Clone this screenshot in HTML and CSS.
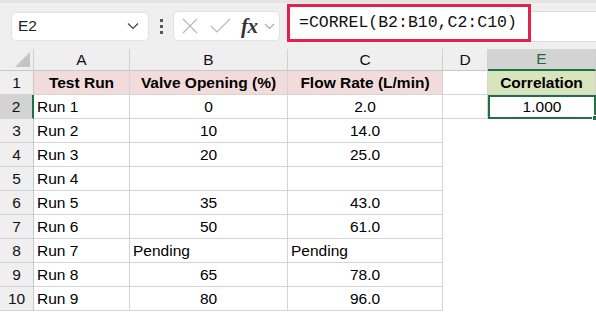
FILE: index.html
```html
<!DOCTYPE html>
<html lang="en">
<head>
    <meta charset="UTF-8">
    <title>CORREL</title>
    <link rel="stylesheet" href="styles.css">
</head>
<body>
    <!-- formula bar -->
    <div class="toolbar">
        <div class="name-box">
            <span>E2</span>
            <svg class="chev" width="12" height="8" viewBox="0 0 12 8"><path d="M1 1.5 L6 6.5 L11 1.5" fill="none" stroke="#444" stroke-width="1.2"/></svg>
        </div>
        <div class="dots"><i></i><i></i><i></i></div>
        <div class="fx-box">
            <svg width="16" height="16" viewBox="0 0 16 16"><path d="M1 1 L15 15 M15 1 L1 15" stroke="#b8b8b8" stroke-width="1.2" fill="none"/></svg>
            <svg width="21" height="16" viewBox="0 0 21 16"><path d="M1 8 L7 14 L20 1" stroke="#b8b8b8" stroke-width="1.2" fill="none"/></svg>
            <span class="fx">fx</span>
            <svg width="11" height="7" viewBox="0 0 11 7"><path d="M1 1 L5.5 5.5 L10 1" fill="none" stroke="#a8a8a8" stroke-width="1.1"/></svg>
        </div>
        <div class="formula">
            <div class="formula-text">=CORREL(B2:B10,C2:C10)</div>
        </div>
    </div>

    <!-- sheet -->
    <div class="sheet">
        <div class="ch corner"><span class="tri"></span></div>
        <div class="ch">A</div>
        <div class="ch">B</div>
        <div class="ch">C</div>
        <div class="ch">D</div>
        <div class="ch ch-active">E</div>

        <div class="rh">1</div>
        <div class="c head">Test Run</div>
        <div class="c head">Valve Opening (%)</div>
        <div class="c head">Flow Rate (L/min)</div>
        <div class="c"></div>
        <div class="c head-green">Correlation</div>

        <div class="rh rh-active">2</div>
        <div class="c">Run 1</div>
        <div class="c num">0</div>
        <div class="c num">2.0</div>
        <div class="c"></div>
        <div class="c num selected">1.000<span class="handle"></span></div>

        <div class="rh">3</div>
        <div class="c">Run 2</div>
        <div class="c num">10</div>
        <div class="c num">14.0</div>
        <div class="c nb"></div>
        <div class="c nb"></div>

        <div class="rh">4</div>
        <div class="c">Run 3</div>
        <div class="c num">20</div>
        <div class="c num">25.0</div>
        <div class="c nb"></div>
        <div class="c nb"></div>

        <div class="rh">5</div>
        <div class="c">Run 4</div>
        <div class="c"></div>
        <div class="c"></div>
        <div class="c nb"></div>
        <div class="c nb"></div>

        <div class="rh">6</div>
        <div class="c">Run 5</div>
        <div class="c num">35</div>
        <div class="c num">43.0</div>
        <div class="c nb"></div>
        <div class="c nb"></div>

        <div class="rh">7</div>
        <div class="c">Run 6</div>
        <div class="c num">50</div>
        <div class="c num">61.0</div>
        <div class="c nb"></div>
        <div class="c nb"></div>

        <div class="rh">8</div>
        <div class="c">Run 7</div>
        <div class="c">Pending</div>
        <div class="c">Pending</div>
        <div class="c nb"></div>
        <div class="c nb"></div>

        <div class="rh">9</div>
        <div class="c">Run 8</div>
        <div class="c num">65</div>
        <div class="c num">78.0</div>
        <div class="c nb"></div>
        <div class="c nb"></div>

        <div class="rh">10</div>
        <div class="c">Run 9</div>
        <div class="c num">80</div>
        <div class="c num">96.0</div>
        <div class="c nb"></div>
        <div class="c nb"></div>
    </div>
</body>
</html>
```

FILE: styles.css
```css
* {
    box-sizing: border-box;
}
body {
    margin: 0;
    padding: 0;
    width: 596px;
    height: 313px;
    overflow: hidden;
    background: #fff;
    font-family: "Liberation Sans", Arial, sans-serif;
    color: #000;
}
.toolbar {
    height: 49px;
    background: #efefef;
    border-top: 3px solid #e4e4e4;
    display: flex;
    align-items: center;
    padding-left: 11px;
}
.name-box {
    width: 138px;
    height: 29px;
    background: #fff;
    border: 1px solid #e2e2e2;
    border-radius: 5px;
    display: flex;
    align-items: center;
    justify-content: space-between;
    padding: 0 9px 0 6px;
    font-size: 15.5px;
    color: #222;
}
.dots {
    width: 24px;
    display: flex;
    flex-direction: column;
    align-items: center;
    gap: 3px;
}
.dots i {
    width: 3px;
    height: 3px;
    background: #555;
}
.fx-box {
    width: 107px;
    height: 30px;
    background: #fff;
    border: 1px solid #e2e2e2;
    border-radius: 5px;
    display: flex;
    align-items: center;
    padding: 0 3px 0 8px;
    gap: 0;
}
.fx-box svg:nth-child(2) {
    margin-left: 12px;
}
.fx {
    font-family: "Liberation Serif", "DejaVu Serif", serif;
    font-style: italic;
    font-weight: bold;
    font-size: 21px;
    color: #333;
    margin-left: 10px;
    margin-right: 6px;
    letter-spacing: -0.5px;
    line-height: 1;
}
.formula {
    flex: 1;
    height: 31px;
    margin-left: 7px;
    background: #fff;
    border: 1px solid #dcdcdc;
    border-right: none;
    position: relative;
}
.formula-text {
    position: absolute;
    left: -1px;
    top: -8px;
    width: 244px;
    height: 38px;
    border: 3px solid #e3204e;
    padding-left: 9px;
    font-family: "Liberation Mono", "DejaVu Sans Mono", monospace;
    font-size: 16.5px;
    line-height: 31px;
    color: #111;
    background: #fff;
}
.sheet {
    display: grid;
    grid-template-columns: 34px 96px 158px 155px 45px 108px;
    grid-template-rows: 22px repeat(10, 24px);
    font-size: 15.5px;
}
.ch {
    background: #efefef;
    border-right: 1px solid #d0d0d0;
    border-bottom: 1px solid #c8c8c8;
    display: flex;
    align-items: center;
    justify-content: center;
    font-size: 15.5px;
    color: #111;
}
.corner {
    position: relative;
    justify-content: flex-end;
    align-items: flex-end;
    padding: 0 3px 3px 0;
}
.tri {
    width: 0;
    height: 0;
    border-left: 15px solid transparent;
    border-bottom: 15px solid #c4c4c4;
}
.ch-active {
    background: #d3d3d3;
    color: #1d6b3e;
    border-bottom: 2px solid #1e7145;
}
.rh {
    background: #efefef;
    border-right: 1px solid #c8c8c8;
    border-bottom: 1px solid #d4d4d4;
    display: flex;
    align-items: center;
    justify-content: center;
    font-size: 15.5px;
    color: #111;
}
.rh-active {
    background: #d3d3d3;
    border-right: 2px solid #1e7145;
}
.c {
    border-right: 1px solid #d4d4d4;
    border-bottom: 1px solid #d4d4d4;
    display: flex;
    align-items: center;
    padding-left: 3px;
    white-space: nowrap;
}
.nb {
    border-color: transparent;
}
.num {
    justify-content: center;
    padding-left: 0;
}
.head {
    background: #f2dcdb;
    font-weight: bold;
    justify-content: center;
    padding-left: 0;
}
.head-green {
    background: #d8e4bc;
    font-weight: bold;
    justify-content: center;
    padding-left: 0;
}
.selected {
    position: relative;
    border: 2px solid #1e7145;
}
.handle {
    position: absolute;
    right: -4px;
    bottom: -4px;
    width: 6px;
    height: 6px;
    background: #1e7145;
    border: 1px solid #fff;
}
```
